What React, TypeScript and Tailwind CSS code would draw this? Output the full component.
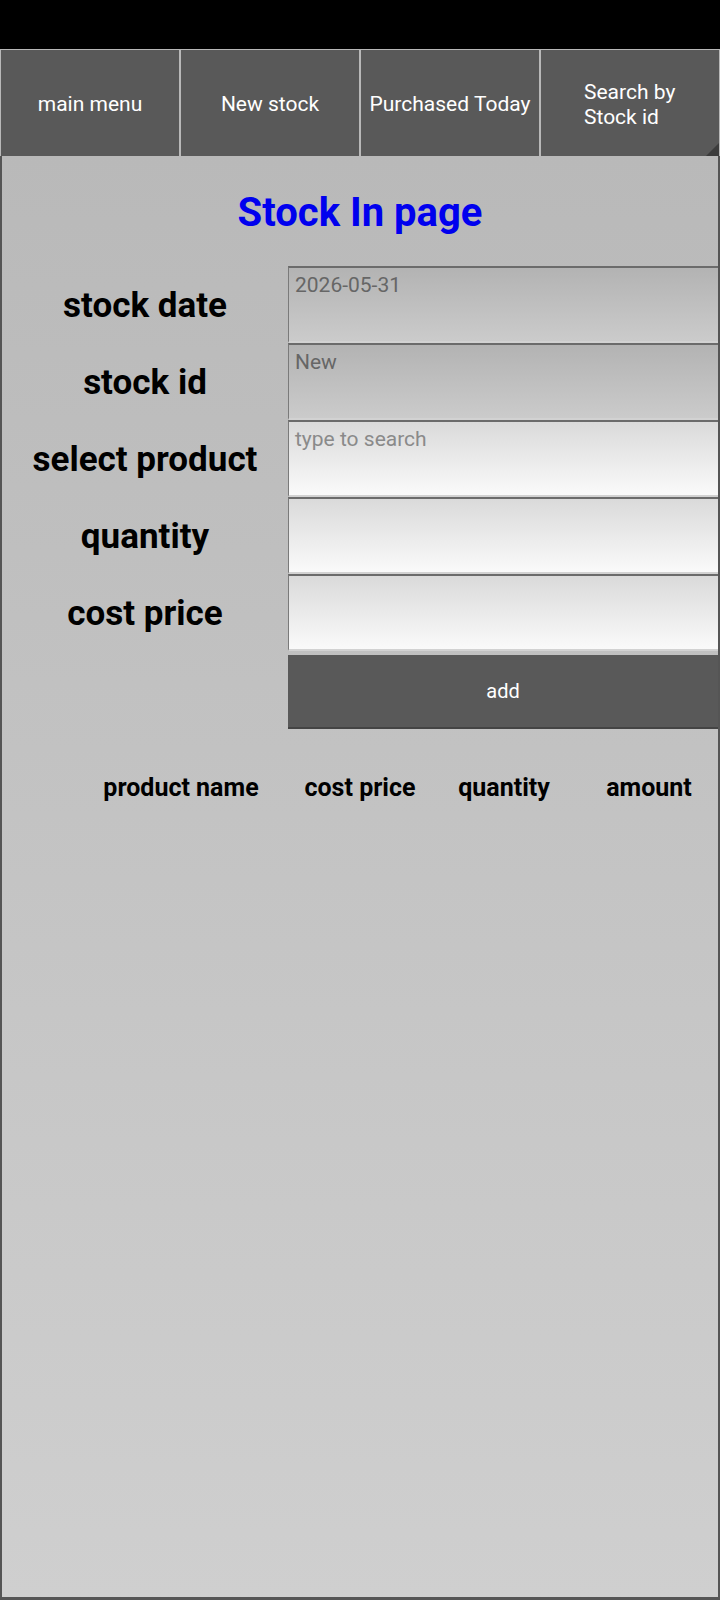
import clsx from 'clsx'

const NAV = ['main menu', 'New stock', 'Purchased Today', 'Search by Stock id']

const FIELDS = [
  { label: 'stock date', value: '2026-05-31', disabled: true },
  { label: 'stock id', value: 'New', disabled: true },
  { label: 'select product', value: 'type to search', disabled: false },
  { label: 'quantity', value: '', disabled: false },
  { label: 'cost price', value: '', disabled: false },
]

const COLUMNS = ['product name', 'cost price', 'quantity', 'amount']

function NavButton({ text, last }: { text: string; last?: boolean }) {
  return (
    <div className="relative flex items-center justify-center bg-[#595959] border border-[#b8b8b8] border-b-0 px-1 pt-[3px] text-center text-[21px] leading-[25px] text-white whitespace-nowrap">
      <span className={clsx(last && 'w-[92px] whitespace-normal text-left')}>{text}</span>
      {/* spinner-style corner mark */}
      {last && (
        <div className="absolute right-0 bottom-0 w-0 h-0 border-l-[13px] border-l-transparent border-b-[13px] border-b-[#3c3c3c]" />
      )}
    </div>
  )
}

function Field({ value, disabled }: { value: string; disabled: boolean }) {
  return (
    <div
      className={clsx(
        'h-[77px] px-[6px] pt-[4px] text-[21px] leading-[26px] border-t-2 border-l border-b-2 border-t-[#6b6b6b] border-l-[#7a7a7a] border-b-[#d2d2d2]',
        disabled
          ? 'bg-gradient-to-b from-[#b3b3b3] to-[#cbcbcb] text-[#666666]'
          : 'bg-gradient-to-b from-[#dadada] to-[#fafafa] text-[#8a8a8a]'
      )}
    >
      {value}
    </div>
  )
}

export default function App() {
  return (
    <div className="w-[720px] h-[1600px] flex flex-col bg-black font-['Roboto',sans-serif]">
      {/* status bar */}
      <div className="h-[49px] shrink-0" />

      {/* top nav */}
      <div className="grid grid-cols-4 h-[107px] shrink-0">
        {NAV.map((n, i) => (
          <NavButton key={n} text={n} last={i === NAV.length - 1} />
        ))}
      </div>

      {/* page body */}
      <div className="flex-1 flex flex-col border-l-2 border-r-2 border-b-[3px] border-[#555555] bg-gradient-to-b from-[#b9b9b9] to-[#cfcfcf]">
        <h1 className="pt-[34px] h-[110px] text-center text-[40px] leading-[46px] font-bold text-[#0000ee]">
          Stock In page
        </h1>

        <div className="grid grid-cols-[286px_1fr]">
          {FIELDS.map((f) => (
            <div key={f.label} className="contents">
              <div className="h-[77px] flex items-center justify-center pt-[3px] text-[35px] font-bold text-black">
                {f.label}
              </div>
              <Field value={f.value} disabled={f.disabled} />
            </div>
          ))}
          <div />
          <div className="mt-[4px] h-[74px] flex items-center justify-center bg-[#595959] border-b-2 border-[#444444] text-[20px] text-white">
            add
          </div>
        </div>

        <div className="mt-[40px] grid grid-cols-[68px_222px_136px_152px_1fr] text-[25px] font-bold text-black">
          <div />
          {COLUMNS.map((c) => (
            <div key={c} className="text-center">
              {c}
            </div>
          ))}
        </div>
      </div>
    </div>
  )
}
